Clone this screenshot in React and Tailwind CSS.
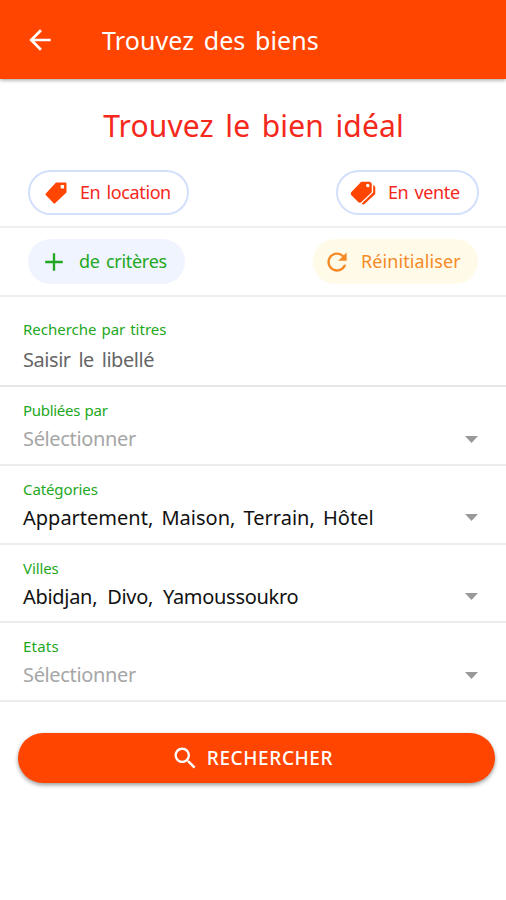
import React from 'react';
import {
  IoMdArrowBack,
  IoMdPricetags,
  IoMdAdd,
  IoMdRefresh,
  IoMdSearch,
} from 'react-icons/io';

const fields = [
  { id: 'publisher', label: 'Publiées par', value: 'Sélectionner', empty: true, labelSpacing: 'tracking-[-0.3px] [word-spacing:1px]', spacing: 'tracking-[-0.35px]' },
  { id: 'categories', label: 'Catégories', value: 'Appartement, Maison, Terrain, Hôtel', labelSpacing: 'tracking-[-0.1px]', spacing: '[word-spacing:3px]' },
  { id: 'cities', label: 'Villes', value: 'Abidjan, Divo, Yamoussoukro', labelSpacing: 'tracking-[-0.1px]', spacing: 'tracking-[-0.3px] [word-spacing:5px]' },
  { id: 'states', label: 'Etats', value: 'Sélectionner', empty: true, labelSpacing: 'tracking-[0.2px]', spacing: 'tracking-[-0.35px]' },
];

const TagIcon = () => (
  <svg className="w-[22px] h-[22px] text-[#ff4500]" viewBox="0 0 22 22">
    <path
      d="M11 0.5h9.3a1.2 1.2 0 0 1 1.2 1.2V10.6L10 21.3a1 1 0 0 1-1.4 0L0.8 13a1 1 0 0 1 0-1.4zM15.7 3v3.4h3.4V3z"
      fill="currentColor"
      fillRule="evenodd"
    />
  </svg>
);

const SelectField = ({ field }) => (
  <button className="w-full h-[78.75px] pl-[23px] pr-[28px] pt-[13px] flex flex-col text-left border-b-2 border-[#ececec]">
    <span className={`text-[15px] leading-5 text-[#22a722] ${field.labelSpacing}`}>{field.label}</span>
    <span className="w-full mt-[5px] flex items-center justify-between">
      <span className={`text-[20px] leading-7 whitespace-nowrap ${field.spacing} ${field.empty ? 'text-[#a6a6a6]' : 'text-[#111]'}`}>
        {field.value}
      </span>
      <svg className="w-[13px] h-[7px]" viewBox="0 0 13 7">
        <path d="M0 0h13L6.5 7z" fill="#999" />
      </svg>
    </span>
  </button>
);

const App = () => {
  return (
    <div className="w-full h-[900px] bg-white font-['Noto_Sans',sans-serif] overflow-hidden">
      {/* Header */}
      <header className="relative h-[79px] pl-[24px] flex items-center bg-[#ff4500] text-white shadow-[0_1px_4px_rgba(0,0,0,0.4)]">
        <IoMdArrowBack className="w-8 h-8" />
        <h1 className="ml-[46px] text-[25px] leading-8 tracking-[0.1px] [word-spacing:3px] whitespace-nowrap">Trouvez des biens</h1>
      </header>

      <h2 className="h-[91px] pt-[27px] pl-[1px] text-center text-[30px] leading-10 tracking-[0.15px] [word-spacing:3.5px] text-[#f4281b] whitespace-nowrap">Trouvez le bien idéal</h2>

      {/* Offer type */}
      <div className="h-[58px] pl-[28px] pr-[27px] flex items-start justify-between text-[#f4281b] text-[18px] border-b-2 border-[#efefef]">
        <button className="w-[161px] h-[45px] pl-[15px] flex items-center rounded-full border-2 border-[#d3e0fc]">
          <TagIcon />
          <span className="ml-[13px] tracking-[-0.4px] [word-spacing:2px] whitespace-nowrap">En location</span>
        </button>
        <button className="w-[143px] h-[45px] pl-[11px] flex items-center rounded-full border-2 border-[#d3e0fc]">
          <IoMdPricetags className="w-7 h-7 text-[#ff4500]" />
          <span className="ml-[11px] tracking-[-0.4px] [word-spacing:2px] whitespace-nowrap">En vente</span>
        </button>
      </div>

      {/* Criteria */}
      <div className="h-[69px] pt-[11px] pl-[28px] pr-[28px] flex items-start justify-between text-[18px] border-b-2 border-[#efefef]">
        <button className="w-[157px] h-[45px] pl-[12px] flex items-center rounded-full bg-[#eff4ff] text-[#22a722]">
          <IoMdAdd className="w-7 h-7" />
          <span className="ml-[11px] tracking-[-0.3px] [word-spacing:2px] whitespace-nowrap">de critères</span>
        </button>
        <button className="w-[165px] h-[45px] pl-[10px] flex items-center rounded-full bg-[#fffbe8] text-[#f58a26]">
          <IoMdRefresh className="w-7 h-7" />
          <span className="ml-[10px] tracking-[0.1px] whitespace-nowrap">Réinitialiser</span>
        </button>
      </div>

      {/* Search form */}
      <label className="h-[90px] pl-[23px] pt-[22px] flex flex-col border-b-2 border-[#e6e6e6]">
        <span className="text-[15px] leading-5 [word-spacing:1px] text-[#22a722]">Recherche par titres</span>
        <span className="mt-[7px] text-[20px] leading-7 tracking-[-0.45px] [word-spacing:3px] text-[#666]">Saisir le libellé</span>
      </label>
      {fields.map((field) => (
        <SelectField key={field.id} field={field} />
      ))}

      <div className="pt-[31px] pl-[18px] pr-[11px]">
        <button className="w-full h-[50px] pr-[9px] flex items-center justify-center rounded-full bg-[#ff4500] text-white shadow-[0_2px_4px_rgba(0,0,0,0.4)]">
          <IoMdSearch className="w-7 h-7" />
          <span className="ml-[8px] text-[19px] font-medium tracking-[0.6px] whitespace-nowrap">RECHERCHER</span>
        </button>
      </div>
    </div>
  );
};

export default App;
